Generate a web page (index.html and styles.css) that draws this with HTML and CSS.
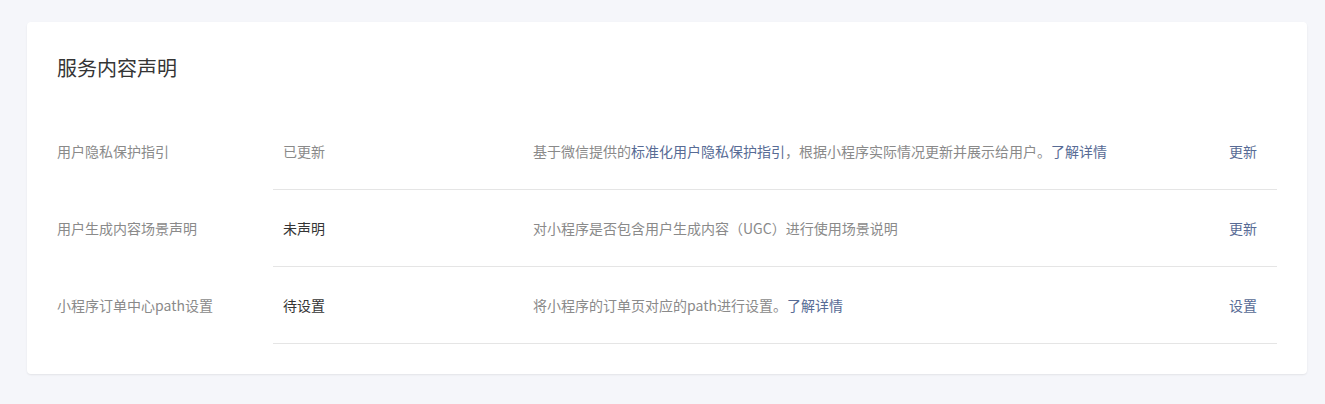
FILE: index.html
```html
<!DOCTYPE html>
<html lang="zh-CN">
<head>
<meta charset="utf-8">
<title>服务内容声明</title>
<link rel="stylesheet" href="styles.css">
</head>
<body>
<div class="page">
  <section class="card">
    <h2 class="card-title">服务内容声明</h2>
    <div class="list">
      <div class="row">
        <div class="label">用户隐私保护指引</div>
        <div class="cells">
          <div class="status muted">已更新</div>
          <div class="desc">基于微信提供的<a class="link" href="#">标准化用户隐私保护指引</a>，根据小程序实际情况更新并展示给用户。<a class="link" href="#">了解详情</a></div>
          <div class="action"><a class="link" href="#">更新</a></div>
        </div>
      </div>
      <div class="row">
        <div class="label">用户生成内容场景声明</div>
        <div class="cells">
          <div class="status">未声明</div>
          <div class="desc">对小程序是否包含用户生成内容（UGC）进行使用场景说明</div>
          <div class="action"><a class="link" href="#">更新</a></div>
        </div>
      </div>
      <div class="row">
        <div class="label">小程序订单中心path设置</div>
        <div class="cells">
          <div class="status">待设置</div>
          <div class="desc">将小程序的订单页对应的path进行设置。<a class="link" href="#">了解详情</a></div>
          <div class="action"><a class="link" href="#">设置</a></div>
        </div>
      </div>
    </div>
  </section>
</div>
</body>
</html>
```

FILE: styles.css
```css
* { box-sizing: border-box; }
html, body {
  margin: 0;
  padding: 0;
  background: #f5f6fa;
}
body {
  font-family: "Noto Sans CJK SC", "Noto Sans", sans-serif;
  color: #353535;
}
.page {
  padding: 22px 18px 29px 27px;
}
.card {
  background: #ffffff;
  border-radius: 4px;
  box-shadow: 0 1px 2px rgba(0, 0, 0, 0.08);
  padding: 0 30px 30px 30px;
}
.card-title {
  margin: 0 0 31px 0;
  padding-top: 32px;
  font-size: 20px;
  line-height: 28px;
  font-weight: 400;
  color: #353535;
}
.row {
  display: flex;
  height: 77px;
  font-size: 14px;
  line-height: 22px;
}
.label {
  width: 216px;
  flex: none;
  display: flex;
  align-items: center;
  color: #8a8a8a;
  padding-bottom: 1px;
}
.cells {
  flex: 1;
  display: flex;
  align-items: center;
  border-bottom: 1px solid #e5e5e5;
}
.status {
  width: 250px;
  flex: none;
  padding-left: 10px;
  color: #353535;
}
.status.muted { color: #8a8a8a; }
.desc {
  flex: 1;
  padding-left: 10px;
  color: #8a8a8a;
}
.action {
  flex: none;
  padding-right: 20px;
  text-align: right;
}
.link {
  color: #576b95;
  text-decoration: none;
}
```
